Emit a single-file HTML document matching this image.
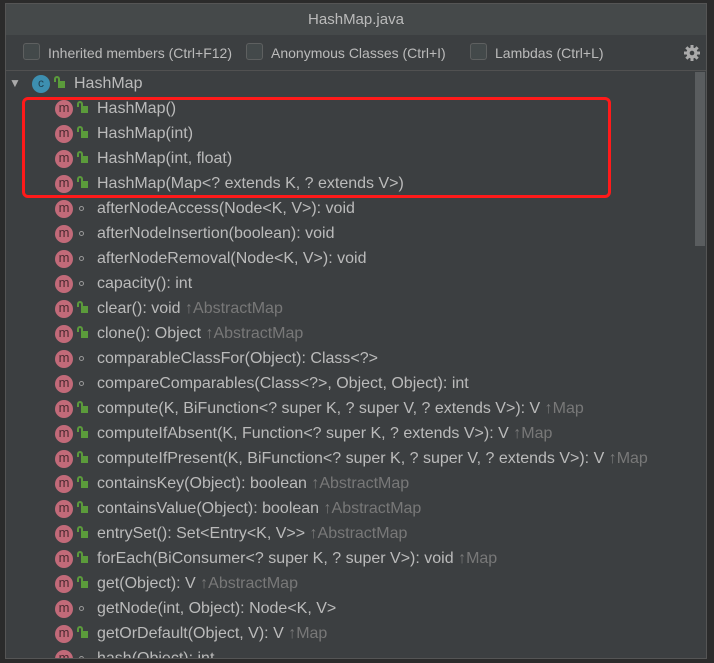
<!DOCTYPE html>
<html><head><meta charset="utf-8"><style>
body{margin:0;width:714px;height:663px;background:#2b2b2b;overflow:hidden;font-family:"Liberation Sans","Noto Sans CJK SC",sans-serif;}
#p{position:absolute;left:5px;top:3px;width:702px;height:656px;background:#3c3f41;border:1px solid #555;box-sizing:border-box;overflow:hidden}
#t{position:absolute;left:0;top:0;width:100%;height:31px;background:#45494a;color:#bbb;font-size:15px;text-align:center;line-height:31px}
#tb{position:absolute;left:0;top:31px;width:100%;height:35px;border-bottom:1px solid #515151;color:#bbb;font-size:14px}
.cb{position:absolute;top:8px;width:15px;height:15px;border:1px solid #5e6060;border-radius:3px;background:#43494a}
.cl{position:absolute;top:10px}
.row{position:absolute;left:0;height:25px;line-height:25px;font-size:16px;color:#bbbbbb;white-space:nowrap}
.row .tx{position:absolute;left:91px;top:0}
.g{color:#787878}
.m{position:absolute;left:49px;top:4px;width:18px;height:18px;border-radius:50%;background:#c26a79;color:#4a2a30;font-size:13px;line-height:16px;text-align:center}
.lk{position:absolute;left:75px;top:10px;width:7px;height:7px;background:#5b9b3b}
.lk:before{content:"";position:absolute;left:-4px;top:-5px;width:2px;height:4px;border:2px solid #5b9b3b;border-bottom:none;border-radius:3px 3px 0 0}
.dt{position:absolute;left:73px;top:10px;width:3px;height:3px;border:1.5px solid #999;border-radius:50%}
#sb{position:absolute;left:689px;top:68px;width:10px;height:174px;background:#5a5d5f}
#red{position:absolute;left:16px;top:93px;width:583px;height:95px;border:3px solid #ff1a1a;border-radius:6px}
</style></head><body>
<div id="p">
<div id="t">HashMap.java</div>
<div id="tb">
<div class="cb" style="left:17px"></div><span class="cl" style="left:42px">Inherited members (Ctrl+F12)</span>
<div class="cb" style="left:240px"></div><span class="cl" style="left:265px">Anonymous Classes (Ctrl+I)</span>
<div class="cb" style="left:464px"></div><span class="cl" style="left:489px">Lambdas (Ctrl+L)</span>
<svg style="position:absolute;left:678px;top:10px" width="16" height="16" viewBox="0 0 16 16"><g fill="#aaa"><circle cx="8" cy="8" r="5.5"/><rect x="6.5" y="0" width="3" height="16"/><rect x="0" y="6.5" width="16" height="3"/><rect x="6.5" y="0" width="3" height="16" transform="rotate(45 8 8)"/><rect x="6.5" y="0" width="3" height="16" transform="rotate(-45 8 8)"/></g><circle cx="8" cy="8" r="2.3" fill="#3c3f41"/></svg>
</div>
<div class="row" style="top:67px;width:100%"><span style="position:absolute;left:3px;top:0;color:#aaa;font-size:12px">▼</span><div style="position:absolute;left:26px;top:4px;width:18px;height:18px;border-radius:50%;background:#3d8fb0;color:#1f3f50;font-size:12px;line-height:17px;text-align:center">c</div><div class="lk" style="left:52px"></div><span class="tx" style="left:68px">HashMap</span></div>
<div id="rows"></div>
<div id="sb"></div>
<div id="red"></div>
</div>
<script>
var R=[["HashMap()",1],["HashMap(int)",1],["HashMap(int, float)",1],["HashMap(Map&lt;? extends K, ? extends V&gt;)",1],
["afterNodeAccess(Node&lt;K, V&gt;): void",0],["afterNodeInsertion(boolean): void",0],["afterNodeRemoval(Node&lt;K, V&gt;): void",0],
["capacity(): int",0],["clear(): void <span class=g>↑AbstractMap</span>",1],["clone(): Object <span class=g>↑AbstractMap</span>",1],
["comparableClassFor(Object): Class&lt;?&gt;",0],["compareComparables(Class&lt;?&gt;, Object, Object): int",0],
["compute(K, BiFunction&lt;? super K, ? super V, ? extends V&gt;): V <span class=g>↑Map</span>",1],
["computeIfAbsent(K, Function&lt;? super K, ? extends V&gt;): V <span class=g>↑Map</span>",1],
["computeIfPresent(K, BiFunction&lt;? super K, ? super V, ? extends V&gt;): V <span class=g>↑Map</span>",1],
["containsKey(Object): boolean <span class=g>↑AbstractMap</span>",1],["containsValue(Object): boolean <span class=g>↑AbstractMap</span>",1],
["entrySet(): Set&lt;Entry&lt;K, V&gt;&gt; <span class=g>↑AbstractMap</span>",1],["forEach(BiConsumer&lt;? super K, ? super V&gt;): void <span class=g>↑Map</span>",1],
["get(Object): V <span class=g>↑AbstractMap</span>",1],["getNode(int, Object): Node&lt;K, V&gt;",0],["getOrDefault(Object, V): V <span class=g>↑Map</span>",1],["hash(Object): int",0]];
var h="";R.forEach(function(r,i){h+='<div class="row" style="top:'+(92+25*i)+'px;width:100%"><div class="m">m</div>'+(r[1]?'<div class="lk"></div>':'<div class="dt"></div>')+'<span class="tx">'+r[0]+'</span></div>';});
document.getElementById("rows").innerHTML=h;
</script>
</body></html>
